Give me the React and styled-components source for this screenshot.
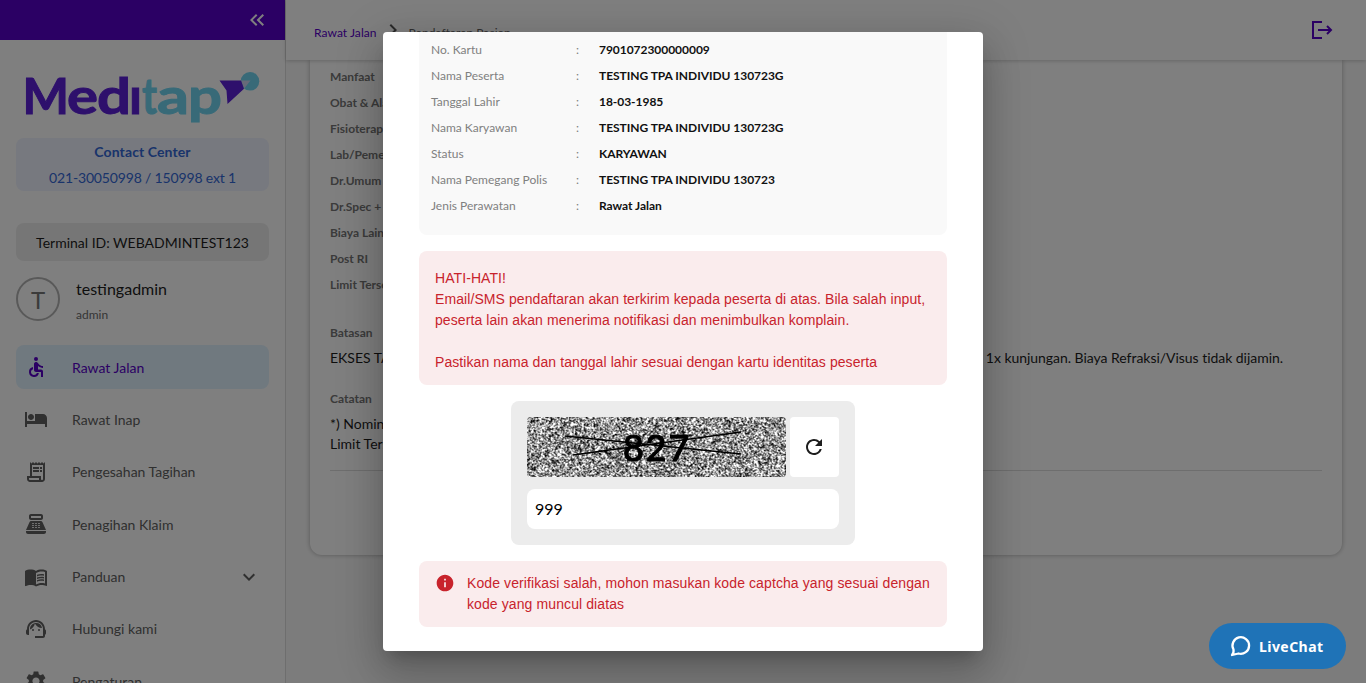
import React, { useEffect, useRef } from "react";
import styled, { createGlobalStyle } from "styled-components";
import {
  MdKeyboardDoubleArrowLeft, MdAccessible, MdHotel, MdOutlineReceiptLong, MdPointOfSale,
  MdMenuBook, MdSupportAgent, MdSettings, MdExpandMore, MdRefresh, MdInfo, MdNavigateNext,
} from "react-icons/md";

const Global = createGlobalStyle`
  * { box-sizing: border-box; }
  body { margin: 0; font-family: Lato, "Open Sans", sans-serif; font-size: 14px; color: #1d1d1d; overflow: hidden; }
`;

const Page = styled.div`
  display: flex;
  width: 1366px;
  height: 683px;
  overflow: hidden;
  background: #f9f9f9;
`;

const Sidebar = styled.aside`
  width: 286px;
  flex: none;
  height: 683px;
  overflow: hidden;
  background: #fff;
  border-right: 1px solid #dcdcdc;
`;

const SideTop = styled.div`
  height: 40px;
  background: #5700c8;
  display: flex;
  align-items: center;
  justify-content: flex-end;
  padding-right: 16px;
  color: #fff;
`;

const SideBody = styled.div`
  display: flex;
  flex-direction: column;
  padding: 28px 16px 0;
`;

const Logo = styled.svg`
  display: block;
  width: 253px;
  height: 60px;
  overflow: visible;
`;

const ContactBox = styled.div`
  height: 53px;
  margin-top: 10px;
  padding-top: 1px;
  border-radius: 8px;
  background: #eef2ff;
  color: #3368d6;
  text-align: center;
  font-size: 14px;
  line-height: 26px;
  letter-spacing: 0.1px;
`;

const Phone = styled.div`
  letter-spacing: -0.16px;
`;

const TerminalBox = styled.div`
  height: 38px;
  margin-top: 32px;
  border-radius: 8px;
  background: #ededed;
  text-align: center;
  line-height: 40px;
  font-size: 14px;
`;

const User = styled.div`
  display: flex;
  gap: 16px;
  margin-top: 16px;
  height: 46px;
`;

const Avatar = styled.div`
  width: 44px;
  height: 44px;
  border: 2px solid #b3b3b3;
  border-radius: 50%;
  color: #777;
  font-size: 24px;
  line-height: 41px;
  text-align: center;
`;

const UserName = styled.div`
  font-size: 16px;
  line-height: 24px;
`;

const UserRole = styled.div`
  font-size: 12px;
  line-height: 18px;
  margin-top: 5px;
  color: #6b6b6b;
`;

const Menu = styled.nav`
  display: flex;
  flex-direction: column;
  gap: 8.4px;
  margin-top: 22px;
`;

const MenuItem = styled.div`
  height: 44px;
  flex: none;
  display: flex;
  align-items: center;
  padding: 0 8px;
  border-radius: 8px;
  font-size: 14px;
  color: ${(p) => (p.$active ? "#5700c8" : "#606060")};
  background: ${(p) => (p.$active ? "#e1f2ff" : "transparent")};
  svg { flex: none; }
`;

const MenuLabel = styled.span`
  flex: 1;
  margin-left: 24px;
  line-height: 21px;
`;

const Main = styled.main`
  flex: 1;
  min-width: 0;
`;

const Header = styled.header`
  position: relative;
  height: 60px;
  background: #fff;
  display: flex;
  align-items: center;
  padding: 5px 32px 0 28px;
  box-shadow: 0 1px 4px rgba(0, 0, 0, 0.2);
  font-size: 12px;
  letter-spacing: 0.06px;
`;

const Crumb = styled.span`
  color: ${(p) => (p.$link ? "#5700c8" : "#606060")};
`;

const CrumbArrow = styled(MdNavigateNext)`
  margin: -6px 4px 0;
  color: #555;
`;

const LogoutIcon = styled.svg`
  margin-left: auto;
  margin-top: -5px;
`;

const Card = styled.section`
  margin-left: 24px;
  width: 1032px;
  height: 495px;
  background: #fff;
  border-radius: 0 0 12px 12px;
  box-shadow: 0 0 5px rgba(0, 0, 0, 0.3);
  padding: 4px 20px 0;
`;

const Benefit = styled.div`
  height: 26px;
  line-height: 26px;
  font-size: 12px;
  font-weight: 700;
  color: #777;
`;

const Section = styled.div`
  margin-top: ${(p) => p.$top}px;
`;

const SectionTitle = styled.div`
  font-size: 12px;
  font-weight: 700;
  line-height: 18px;
  color: #777;
`;

const SectionText = styled.div`
  display: flex;
  justify-content: space-between;
  margin-top: ${(p) => p.$top || 0}px;
  width: 953px;
  font-size: 14px;
  line-height: 20px;
`;

const Visit = styled.span`
  letter-spacing: -0.04px;
`;

const Rule = styled.div`
  height: 1px;
  margin-top: 15.5px;
  background: #dcdcdc;
`;

const Overlay = styled.div`
  position: absolute;
  top: 0;
  left: 0;
  width: 1366px;
  height: 683px;
  display: flex;
  justify-content: center;
  align-items: flex-start;
  padding-top: 32px;
  background: rgba(0, 0, 0, 0.5);
`;

const Dialog = styled.div`
  width: 600px;
  height: 619px;
  padding: 0 36px;
  overflow: hidden;
  background: #fff;
  border-radius: 4px;
  box-shadow: 0 11px 15px -7px rgba(0, 0, 0, 0.2), 0 24px 38px 3px rgba(0, 0, 0, 0.14), 0 9px 46px 8px rgba(0, 0, 0, 0.12);
`;

const Details = styled.div`
  height: 203px;
  padding: 5px 12px 0;
  background: #f9f9f9;
  border-radius: 0 0 8px 8px;
`;

const DetailRow = styled.div`
  display: grid;
  grid-template-columns: 145px 23px 1fr;
  height: 26px;
  line-height: 26px;
  font-size: 12px;
  color: #808080;
`;

const DetailValue = styled.span`
  color: #111;
  font-weight: 700;
  letter-spacing: -0.04px;
`;

const Alert = styled.div`
  display: flex;
  gap: 12px;
  margin-top: 16px;
  height: ${(p) => p.$h}px;
  padding: ${(p) => p.$pad}px 12px 0 16px;
  border-radius: 8px;
  background: #faeced;
  color: #c8232c;
  font-family: "Liberation Sans", Arial, sans-serif;
  font-size: 14px;
  line-height: 21px;
  letter-spacing: ${(p) => p.$track}px;
  white-space: pre-line;
  svg { flex: none; }
`;

const CaptchaBox = styled.div`
  width: 344px;
  height: 144px;
  margin: 16px auto 0;
  padding: 16px;
  border-radius: 8px;
  background: #ececec;
`;

const CaptchaRow = styled.div`
  display: flex;
  gap: 4px;
  height: 60px;
`;

const CaptchaArt = styled.div`
  position: relative;
  width: 259px;
  height: 60px;
  border-radius: 4px;
  overflow: hidden;
  canvas, svg { position: absolute; top: 0; left: 0; }
`;

const Refresh = styled.button`
  flex: 1;
  display: flex;
  align-items: center;
  justify-content: center;
  padding: 0 2px 0 0;
  border: 0;
  border-radius: 4px;
  background: #fff;
  color: #1d1d1d;
`;

const Input = styled.div`
  height: 40px;
  margin-top: 12px;
  padding-left: 8px;
  border-radius: 8px;
  background: #fff;
  font-size: 16px;
  line-height: 39px;
  color: #000;
`;

const LiveChat = styled.div`
  position: absolute;
  left: 1209px;
  top: 623px;
  width: 137px;
  height: 46px;
  display: flex;
  align-items: center;
  gap: 7px;
  padding-left: 21px;
  border-radius: 23px;
  background: #1f73b7;
  color: #fff;
  font: 700 14px "Noto Sans", sans-serif;
  letter-spacing: 0.45px;
`;

function Captcha() {
  const ref = useRef(null);
  useEffect(() => {
    const w = 259;
    const ctx = ref.current.getContext("2d");
    const img = ctx.createImageData(w, 60);
    let seed = 827;
    const noise = Array.from({ length: (w + 1) * 61 }, () => {
      seed = (Math.imul(seed, 1664525) + 1013904223) >>> 0;
      return seed >>> 24;
    });
    for (let y = 0; y < 60; y++) {
      for (let x = 0; x < w; x++) {
        const n = y * (w + 1) + x;
        const v = noise[n] * 0.4 + noise[n + 1] * 0.25 + noise[n + w + 1] * 0.2 + noise[n + w + 2] * 0.15;
        const i = (y * w + x) * 4;
        img.data[i] = img.data[i + 1] = img.data[i + 2] = (v - 128) * 1.45 + 148;
        img.data[i + 3] = 255;
      }
    }
    ctx.putImageData(img, 0, 0);
  }, []);
  return (
    <CaptchaArt>
      <canvas ref={ref} width="259" height="60" />
      <svg width="259" height="60">
        <path d="M38 19L214 37M46 38L214 15" stroke="#000" strokeWidth="1.3" />
        <text x="96 118.500 141.500" y="43.5" fontFamily="Lato, sans-serif" fontWeight="400" fontSize="36" stroke="#000" strokeWidth="1.2">827</text>
      </svg>
    </CaptchaArt>
  );
}

const logoLetters = [
  ["M", 22.5, 46.5, "#5c20d8"], ["e", 67, 31, "#5c20d8"], ["d", 97, 34, "#5c20d8"], ["ı", 129, 13, "#5c20d8"],
  ["t", 142, 15, "#70d4f0"], ["a", 157, 32, "#70d4f0"], ["p", 188, 34, "#70d4f0"],
];

const benefits = ["Manfaat", "Obat & Alat", "Fisioterapi", "Lab/Pemeriksaan", "Dr.Umum", "Dr.Spec + Obat", "Biaya Lain", "Post RI", "Limit Tersedia"];

const details = [
  ["No. Kartu", "7901072300000009"],
  ["Nama Peserta", "TESTING TPA INDIVIDU 130723G"],
  ["Tanggal Lahir", "18-03-1985"],
  ["Nama Karyawan", "TESTING TPA INDIVIDU 130723G"],
  ["Status", "KARYAWAN"],
  ["Nama Pemegang Polis", "TESTING TPA INDIVIDU 130723"],
  ["Jenis Perawatan", "Rawat Jalan"],
];

const menu = [
  ["Rawat Jalan", MdAccessible],
  ["Rawat Inap", MdHotel],
  ["Pengesahan Tagihan", MdOutlineReceiptLong],
  ["Penagihan Klaim", MdPointOfSale],
  ["Panduan", MdMenuBook],
  ["Hubungi kami", MdSupportAgent],
  ["Pengaturan", MdSettings],
];

export default function App() {
  return (
    <>
      <Global />
      <Page>
        <Sidebar>
          <SideTop><MdKeyboardDoubleArrowLeft size={24} /></SideTop>
          <SideBody>
            <Logo viewBox="16 68 253 60" fontFamily="Lato, sans-serif" fontWeight="700" fontSize="49">
              {logoLetters.map(([letter, x, width, color]) => (
                <text key={letter} x={x} y="113.500" textLength={width} lengthAdjust="spacingAndGlyphs" fill={color} stroke={color} strokeWidth="1">{letter}</text>
              ))}
              <circle cx="250" cy="81.300" r="9.300" fill="#70d4f0" />
              <path d="M241 80.500H250.500L244 88.700Z" fill="#cfd5f2" />
              <path d="M219.500 80.500H241L244 88.700L227.500 104L226.500 90.500Z" fill="#5c20d8" />
            </Logo>
            <ContactBox><b>Contact Center</b><Phone>021-30050998 / 150998 ext 1</Phone></ContactBox>
            <TerminalBox>Terminal ID: WEBADMINTEST123</TerminalBox>
            <User>
              <Avatar>T</Avatar>
              <div><UserName>testingadmin</UserName><UserRole>admin</UserRole></div>
            </User>
            <Menu>
              {menu.map(([label, Icon], i) => (
                <MenuItem key={label} $active={i === 0}>
                  <Icon size={24} />
                  <MenuLabel>{label}</MenuLabel>
                  {label === "Panduan" && <MdExpandMore size={24} />}
                </MenuItem>
              ))}
            </Menu>
          </SideBody>
        </Sidebar>
        <Main>
          <Header>
            <Crumb $link>Rawat Jalan</Crumb>
            <CrumbArrow size={24} />
            <Crumb>Pendaftaran Pasien</Crumb>
            <LogoutIcon width="24" height="24" fill="none" stroke="#5700c8" strokeWidth="2">
              <path d="M12 4H3v16h9M8 12h13M17 8l4 4-4 4" />
            </LogoutIcon>
          </Header>
          <Card>
            {benefits.map((b) => <Benefit key={b}>{b}</Benefit>)}
            <Section $top={26}>
              <SectionTitle>Batasan</SectionTitle>
              <SectionText $top={6}><span>EKSES TAGIHAN</span><Visit>1x kunjungan. Biaya Refraksi/Visus tidak dijamin.</Visit></SectionText>
            </Section>
            <Section $top={22}>
              <SectionTitle>Catatan</SectionTitle>
              <SectionText $top={6}>*) Nominal</SectionText>
              <SectionText>Limit Tersedia</SectionText>
            </Section>
            <Rule />
          </Card>
        </Main>
      </Page>
      <Overlay>
        <Dialog>
          <Details>
            {details.map(([k, v]) => (
              <DetailRow key={k}><span>{k}</span><span>:</span><DetailValue>{v}</DetailValue></DetailRow>
            ))}
          </Details>
          <Alert $h={134} $pad={17} $track={0.08}>{"HATI-HATI!\nEmail/SMS pendaftaran akan terkirim kepada peserta di atas. Bila salah input, peserta lain akan menerima notifikasi dan menimbulkan komplain.\n\nPastikan nama dan tanggal lahir sesuai dengan kartu identitas peserta"}</Alert>
          <CaptchaBox>
            <CaptchaRow>
              <Captcha />
              <Refresh><MdRefresh size={24} /></Refresh>
            </CaptchaRow>
            <Input>999</Input>
          </CaptchaBox>
          <Alert $h={66} $pad={12} $track={0.1}>
            <MdInfo size={20} />
            <span>Kode verifikasi salah, mohon masukan kode captcha yang sesuai dengan kode yang muncul diatas</span>
          </Alert>
        </Dialog>
      </Overlay>
      <LiveChat>
        <svg width="22" height="22" fill="none" stroke="#fff" strokeWidth="2.300" strokeLinejoin="round">
          <path d="M3.500 14.500A8.300 8.300 0 1 1 8.500 18.500L2 20Q4 18 3.500 14.500Z" />
        </svg>
        LiveChat
      </LiveChat>
    </>
  );
}
